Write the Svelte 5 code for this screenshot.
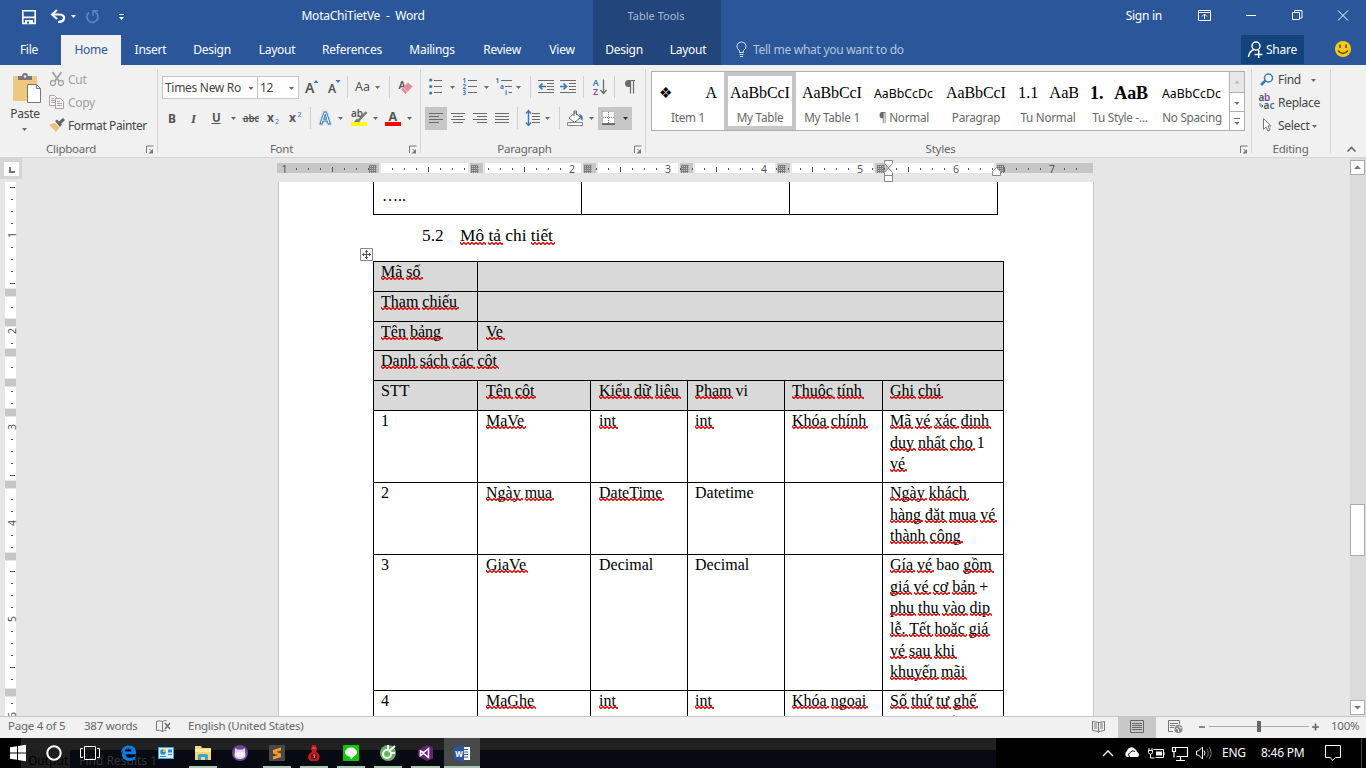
<script>
  const G = '#6a6a6a', B = '#3b78b5';
  const dn = (x, y, c = G) => `<path d="M${x - 2.5} ${y - 1}h5l-2.5 3z" fill="${c}"/>`;
  const t = (x, y, s, txt, extra = '') => `<text x="${x}" y="${y}" font-size="${s}" fill="#555" ${extra}>${txt}</text>`;
  const ln = (x1, x2, ys, c = G) => ys.map((y) => `<path d="M${x1} ${y}H${x2}" stroke="${c}"/>`).join('');
  const sep = (x, y) => `<path d="M${x}.5 ${y}v22" stroke="#d0d0d0"/>`;
  const launch = (x) => `<path d="M${x} 153v-7h7M${x + 3} 149l3 3" stroke="#777" fill="none"/><path d="M${x + 6.5} 149v4.500h-4.500z" fill="#777"/>`;

  const quick = [
    { x: 18, w: 24, m: '<path d="M22.8 10.8h12.4v12.6H22.8z" fill="none" stroke="#fff" stroke-width="1.6"/><path d="M23 16.5h12v1.7H23zM25 20h8v4h-8z" fill="#fff"/><path d="M27 21.5h2v2h-2z" fill="#2b579a"/>' },
    { x: 42, w: 38, m: '<path d="M52 14.5h7.5c6.5 0 6 7.500-1.500 7.500" fill="none" stroke="#fff" stroke-width="2.200"/><path d="M57 10l-5 4.500 5 4.500" fill="none" stroke="#fff" stroke-width="2"/>' + dn(73.5, 16, '#fff') },
    { x: 80, w: 28, m: '<path d="M89 12.500a5.500 5.500 0 1 0 5.500-.8" fill="none" stroke="#5f83bb" stroke-width="1.800"/><path d="M98 10.700h-5v5" fill="none" stroke="#5f83bb" stroke-width="1.600"/>' },
    { x: 108, w: 30, m: '<path d="M119 14.500h5" stroke="#fff"/>' + dn(121.5, 18, '#fff') }
  ];
  const tabs = [['Insert', 59], ['Design', 64], ['Layout', 66], ['References', 84], ['Mailings', 76], ['Review', 64], ['View', 56]];

  const font1 = [
    { x: 299, w: 27, m: t(305, 93, 14, 'A', 'font-weight="600"') + `<path d="M313.500 83l2.500-3 2.500 3z" fill="${B}"/>` },
    { x: 326, w: 22, m: t(328, 93, 12, 'A', 'font-weight="600"') + `<path d="M335.500 80h5l-2.500 3z" fill="${B}"/>` + sep(347, 76) },
    { x: 348, w: 42, m: t(355, 91, 12.5, 'Aa') + dn(377.500, 87) + sep(389, 76) },
    { x: 390, w: 28, m: t(398.500, 89, 10.500, 'A', 'font-weight="600"') + '<path d="M401 89.500l7-7 4.500 4-7 7.500z" fill="#e8899b"/><path d="M403 87.500l4.500 4.500" stroke="#f8d5dc"/>' }
  ];
  const font2 = [
    { x: 162, w: 22, m: t(168, 122.500, 12, 'B', 'font-weight="700"') },
    { x: 184, w: 20, m: t(191, 122.500, 13, 'I', 'font-style="italic" font-weight="600" font-family="Liberation Serif"') },
    { x: 204, w: 37, m: t(212, 121.500, 11.500, 'U', 'font-weight="700"') + '<path d="M211.500 123.500h9" stroke="#555"/>' + dn(233.500, 118) },
    { x: 241, w: 24, m: t(243, 122, 10.500, 'abc', 'font-weight="600" textLength="16" lengthAdjust="spacingAndGlyphs"') + '<path d="M242.500 118.500h16.500" stroke="#555"/>' },
    { x: 265, w: 22, m: t(267, 122, 12, 'x', 'font-weight="700"') + `<text x="275" y="124" font-size="7" fill="${B}">2</text>` },
    { x: 287, w: 24, m: t(289, 122, 12, 'x', 'font-weight="700"') + `<text x="297.500" y="116.500" font-size="7" fill="${B}">2</text>` + sep(310, 107) },
    { x: 311, w: 35, m: `<text x="320" y="123.500" font-size="15.500" font-weight="600" fill="#fff" stroke="${B}" stroke-width=".9" style="filter:drop-shadow(0 0 1px #8fb8e0)">A</text>` + dn(340.500, 118) },
    { x: 346, w: 35, m: t(351, 117, 10, 'ab', 'font-weight="600"') + '<path d="M366.500 112l-7.500 8" stroke="#777" stroke-width="2.500"/><path d="M354 122l3-3.500 3.500 2.500-1.500 1z" fill="#777"/><path d="M351 122h16v4h-16z" fill="#ff0"/>' + dn(375.500, 118) },
    { x: 381, w: 34, m: t(388.500, 121, 12.500, 'A', 'font-weight="700"') + '<path d="M385 122h16v4h-16z" fill="#f00"/>' + dn(409.500, 118) }
  ];
  const para1 = [
    { x: 421, w: 37, m: [80, 86.500, 93].map((y) => `<circle cx="430.700" cy="${y}" r="1.600" fill="${B}"/>`).join('') + ln(434, 442, [80.500, 86.500, 92.500]) + dn(452.500, 87) },
    { x: 458, w: 34, m: [1, 2, 3].map((n, i) => `<text x="462.500" y="${83 + i * 6}" font-size="6.200" font-weight="700" fill="${B}">${n}</text>`).join('') + ln(468, 477, [80.500, 86.500, 92.500]) + dn(486.500, 87) },
    { x: 492, w: 39, m: `<g font-size="6.500" font-weight="700" fill="${B}"><text x="495.500" y="83">1</text><text x="500" y="89">a</text><text x="505" y="95">i</text></g>` + ln(501, 512, [80.500]) + ln(505, 512, [86.500]) + ln(508.500, 512, [92.500]) + dn(518.500, 87) + sep(530, 76) },
    { x: 531, w: 26, m: ln(538, 554, [80.500, 92.500]) + ln(547, 554, [83.500, 86.500, 89.500]) + `<path d="M546 86.500h-6M542.500 83.500l-3 3 3 3" stroke="${B}" stroke-width="1.700" fill="none"/>` },
    { x: 557, w: 27, m: ln(560, 576, [80.500, 92.500]) + ln(569, 576, [83.500, 86.500, 89.500]) + `<path d="M560 86.500h6M563.500 83.500l3 3-3 3" stroke="${B}" stroke-width="1.700" fill="none"/>` + sep(583, 76) },
    { x: 584, w: 31, m: `<text x="592.800" y="85.800" font-size="9" font-weight="600" fill="${B}">A</text><text x="593" y="94.500" font-size="9" font-weight="600" fill="#8648a5">Z</text><path d="M603.500 79.500v13M600.500 90l3 3.500 3-3.500" stroke="${G}" fill="none" stroke-width="1.300"/>` + sep(614, 76) },
    { x: 615, w: 28, m: `<path d="M629 80.500h6M630.500 80.500v13M633.500 80.500v13" stroke="${G}" stroke-width="1.200"/><path d="M630 80h-1.500a3.500 3.500 0 0 0 0 7h1.500z" fill="${G}"/>` }
  ];
  const rowsY = [113.500, 116.500, 119.500, 122.500];
  const al = (x, mode) => rowsY.map((y, i) => { const w = i % 2 && mode !== 'j' ? 10 : 14; const s = mode === 'c' ? x + (14 - w) / 2 : mode === 'r' ? x + 14 - w : x; return ln(s, s + w, [y]); }).join('');
  const para2 = [
    { x: 425, w: 22, bg: 1, m: al(429, 'l') },
    { x: 447, w: 22, m: al(451, 'c') },
    { x: 469, w: 22, m: al(473, 'r') },
    { x: 491, w: 27, m: al(495, 'j') + sep(517, 107) },
    { x: 518, w: 42, m: ln(532, 540, rowsY) + `<path d="M528.500 111v14M526 113.500l2.500-3 2.500 3M526 122.500l2.500 3 2.500-3" stroke="${B}" fill="none" stroke-width="1.400"/>` + dn(547.500, 118) + sep(559, 107) },
    { x: 560, w: 38, m: `<path d="M569 118l6-5.500 5.500 5-6 5z" fill="#fff" stroke="${G}"/><path d="M574 116v-5h2.500v4" stroke="${G}" fill="none"/><path d="M579 114q5 1 3.500 7l-2.500-3z" fill="${B}"/><path d="M567.500 122.500h15v3h-15z" fill="#fff" stroke="#888"/>` + dn(591.500, 118) },
    { x: 598, w: 34, bg: 1, m: '<path d="M602 111h13v13h-13z" fill="#fff"/><path d="M602.500 111.500h12v12M602.500 111.500v12M608.500 112v12M603 117.500h12" fill="none" stroke="#777" stroke-dasharray="1 1"/><path d="M602 124h13" stroke="#444" stroke-width="1.500"/>' + dn(625.500, 118, '#333') }
  ];

  const styles = [
    ['❖', 'A', 'Item 1', 'item'], ['', 'AaBbCcI', 'My Table', 'on'], ['', 'AaBbCcI', 'My Table 1', ''], ['', 'AaBbCcDc', '¶ Normal', 'sans'],
    ['', 'AaBbCcI', 'Paragrap', ''], ['1.1', 'AaB', 'Tu Normal', 'num'], ['1.', 'AaB', 'Tu Style -...', 'bold'], ['', 'AaBbCcDc', 'No Spacing', 'sans']
  ];

  // horizontal ruler: 96px per inch with its origin at x=380
  const hTicks = [];
  for (let i = -7; i <= 58; i++) {
    const x = 380 + i * 12;
    if (i % 8 === 0) { const n = Math.abs(i / 8); if (n > 1) hTicks.push([x, 'n', n]); }
    else hTicks.push([x, i % 4 === 0 ? 'h' : 't']);
  }
  const whites = [[381, 468], [485, 581], [598, 678], [695, 775], [792, 873], [889, 994]];
  const marks = [373, 475, 588, 685, 782, 881, 1001];
  const vTicks = [];
  for (let i = -4; i <= 40; i++) {
    const y = 235 + i * 12;
    if (i % 8 === 0) vTicks.push([y, 'n', i / 8 + 1]);
    else vTicks.push([y, i % 4 === 0 ? 'h' : 't']);
  }
  const vGrey = [289, 319, 349, 379, 409, 481, 553, 689];

  const plain = new Set(['STT', '1', '2', '3', '4', 'vi', 'Datetime', 'Decimal', 'bao', '+', 'chi', '5.2']);
  const words = (s) => s.split(' ').map((w) => ({ w, bad: !plain.has(w) }));
  const rows = [
    { h: 30, k: 'two', grey: 1, c: [['Mã số'], ['']] },
    { h: 30, k: 'two', grey: 1, c: [['Tham chiếu'], ['']] },
    { h: 29, k: 'two', grey: 1, c: [['Tên bảng'], ['Ve']] },
    { h: 30, k: 'one', grey: 1, c: [['Danh sách các cột']] },
    { h: 30, k: 'six', grey: 1, c: [['STT'], ['Tên cột'], ['Kiểu dữ liệu'], ['Phạm vi'], ['Thuộc tính'], ['Ghi chú']] },
    { h: 72, k: 'six', c: [['1'], ['MaVe'], ['int'], ['int'], ['Khóa chính'], ['Mã vé xác định', 'duy nhất cho 1', 'vé']] },
    { h: 72, k: 'six', c: [['2'], ['Ngày mua'], ['DateTime'], ['Datetime'], [''], ['Ngày khách', 'hàng đặt mua vé', 'thành công']] },
    { h: 136, k: 'six', c: [['3'], ['GiaVe'], ['Decimal'], ['Decimal'], [''], ['Gía vé bao gồm', 'giá vé cơ bản +', 'phụ thu vào dịp', 'lễ. Tết hoặc giá', 'vé sau khi', 'khuyến mãi']] },
    { h: 72, k: 'six', c: [['4'], ['MaGhe'], ['int'], ['int'], ['Khóa ngoại'], ['Số thứ tự ghế', 'của chuyến']] }
  ];

  const apps = [
    { x: 0, w: 36, m: '<path d="M10 747.200l7-1v6.300h-7zM18 746l8-1.200v7.700h-8zM10 753.500h7v6.300l-7-1zM18 753.500h8v7.700l-8-1.200z" fill="#fff"/>' },
    { x: 36, w: 36, m: '<circle cx="54" cy="753" r="6.700" fill="none" stroke="#fff" stroke-width="2"/>' },
    { x: 72, w: 38, m: '<path d="M84.500 746.500h11v13h-11zM83 748.500h-2.500v9H83M97 748.500h2.500v9H97" fill="none" stroke="#fff"/>' },
    { x: 110, w: 37, m: '<path d="M121 753c.5-5 3.500-7.500 8-7.500 5 0 7.500 3.500 7 8.700h-10.500c.3 4 5.500 4.600 9.500 2.300v3c-5 2.500-13 1.500-13-5 0-3 2-5.500 4.500-6.300-1 1-1.600 2-1.700 3.300h6.700c.2-4-5.500-4.500-10.500 1.500z" fill="#0a7be0"/>' },
    { x: 147, w: 37, m: '<rect x="158" y="747" width="16" height="12" fill="#3ca2dd"/><path d="M159 748h14v10h-14z" fill="#d5eef9"/><circle cx="163" cy="752" r="2.800" fill="#2a8ccb"/><path d="M163 752v-3a3 3 0 0 1 3 3z" fill="#f2b84b"/><path d="M168 749.500h4v3h-4zM160 756h6v1h-6zM168 754h4v1h-4z" fill="#2a8ccb"/>' },
    { x: 184, w: 37, run: 1, m: '<path d="M195 746h6l1 2h9v12h-16z" fill="#f7d774"/><path d="M195 749h16v3h-16z" fill="#ffeaa0"/><path d="M198 760v-4q0-2 2-2h6q2 0 2 2v4h-3v-3h-4v3z" fill="#3aa5dc"/>' },
    { x: 221, w: 37, m: '<circle cx="240" cy="753" r="8" fill="#6e4596"/><path d="M235 748l2.500 1.500h5l2.500-1.500v4c2 6-2 7-5 7s-7-1-5-7z" fill="#ded5ea"/><path d="M235.500 753q4.500-2 9 0 .5 4-4.500 4t-4.500-4" fill="#f7edf0"/>' },
    { x: 258, w: 37, run: 1, m: '<rect x="269" y="745" width="16" height="16" rx="1" fill="#484848"/><path d="M273 750l8-2.500v3l-5 1.600 5 1.500v3.500l-8 2.500v-3l5-1.600-5-1.600z" fill="#ff9b20"/>' },
    { x: 295, w: 37, run: 1, m: '<path d="M312 745h4l1 4-1 3c5 2 4 8 1 9h-6c-4-1-4-7 1-9l-1-3z" fill="#c51b20"/><circle cx="314" cy="756.500" r="3" fill="#601015"/><path d="M312.500 748h3M313 755h2l-1 3" stroke="#ff7773" fill="none"/>' },
    { x: 332, w: 37, run: 1, m: '<rect x="343" y="745" width="16" height="16" rx="1" fill="#08c900"/><ellipse cx="351" cy="752.300" rx="6" ry="4.700" fill="#fff"/><path d="M350 756h4l-3 3.500z" fill="#fff"/>' },
    { x: 369, w: 37, run: 1, m: '<circle cx="388" cy="753" r="8" fill="#65b45f"/><circle cx="387" cy="754" r="4" fill="none" stroke="#fff" stroke-width="2"/><path d="M389 751l6-5M388 745v4M395 753h-4" stroke="#fff" stroke-width="2"/>' },
    { x: 406, w: 38, run: 1, m: '<path d="M427 745l6 2.500v11l-6 2.500-9-5v-6z" fill="#68217a"/><path d="M420.500 751v4.500l3-2 5 4v-9l-5 4z" fill="none" stroke="#fff" stroke-width="1.500"/>' },
    { x: 444, w: 36, act: 1, run: 1, m: '<path d="M462 747h8v13h-8z" fill="#fff"/><path d="M463 749.500h5M463 752h5M463 754.500h5M463 757h5" stroke="#2b579a"/><path d="M454 747l10-2v17l-10-2z" fill="#2b579a"/><text x="455.300" y="757" font-size="8" font-weight="700" fill="#fff">W</text>' }
  ];
  const tray = '<path d="M1103 756l5-5 5 5" stroke="#fff" fill="none" stroke-width="1.300"/><path d="M1127 757a3.500 3.500 0 0 1 0-6 4.500 4.500 0 0 1 8-2 4 4 0 0 1 2 3 3 3 0 0 1 1 5z" fill="#fff"/><path d="M1129.500 757q-2.500-3 .5-4.500 2-3 5-1" stroke="#000" fill="none"/><path d="M1153.500 749.500h10v8h-8M1164 752v3M1149 748v3M1152 748v3M1148.500 750.500h4v2q-1 2-2 2t-2-2zM1150.500 754v4h4" stroke="#fff" fill="none"/><path d="M1156 751.500h6v4h-6z" fill="#fff"/><path d="M1176 747.500h11.500v9h-11M1180.500 757v3M1176 760.500h9M1172.500 747.500h3v4h-3zM1174 751.500v6" stroke="#fff" fill="none" stroke-width="1.200"/><path d="M1196.500 751h2l4-4v12l-4-4h-2z" stroke="#fff" fill="none"/><path d="M1204 750.500q2 2.500 0 5" stroke="#fff" fill="none"/><path d="M1206.500 748.500q3.500 4.500 0 9M1209 747q4.500 6 0 12" stroke="#777" fill="none"/>';
</script>

{#snippet ic(x, y, w, h, m)}
  <svg width={w} height={h} viewBox="{x} {y} {w} {h}">{@html m}</svg>
{/snippet}
{#snippet line(s)}
  {#each words(s) as p, i}{#if i}{' '}{/if}<span class:bad={p.bad && p.w}>{p.w}</span>{/each}
{/snippet}

<div class="window">
  <header>
    <div class="title-row">
      {#each quick as q}{@render ic(q.x, 0, q.w, 35, q.m)}{/each}
      <span class="doc-name">MotaChiTietVe&nbsp; -&nbsp; Word</span>
      <span class="context">Table Tools</span>
      <span class="sign">Sign in</span>
      {@render ic(1180, 0, 186, 35, '<path d="M1198.500 10.500h12v10h-12zM1198.500 12.500h12M1204.500 19v-5M1202 16.500l2.500-2.500 2.500 2.500M1246 15.500h10M1292.500 12.500h7v7h-7zM1294.500 12v-1.500h7.500v7.500h-2M1338 10.500l10 10M1348 10.500l-10 10" stroke="#fff" fill="none"/>')}
    </div>
    <nav>
      <span class="file">File</span><span class="home">Home</span>
      {#each tabs as [n, w]}<span style:width="{w}px">{n}</span>{/each}
      <span class="ctx d">Design</span><span class="ctx l">Layout</span>
      {@render ic(721, 35, 32, 30, '<path d="M739.500 52.500v-2q-3-2-2.500-5 .5-3.500 4.500-3.500t4.500 3.500q.5 3-2.500 5v2zM739.500 54.500h4M740 56.500h3" stroke="#d5deec" fill="none"/>')}
      <span class="tell">Tell me what you want to do</span>
      <span class="share">{@render ic(1241, 35, 25, 30, '<circle cx="1256" cy="46" r="4" stroke="#fff" fill="none" stroke-width="1.400"/><path d="M1254 49.500q-5 2-5.500 7.500M1257.500 49.500l2 2M1254.500 54.500h8M1258.700 51v7" stroke="#fff" fill="none" stroke-width="1.400"/>')}Share</span>
      {@render ic(1304, 35, 62, 30, '<circle cx="1343" cy="49" r="8" fill="#fcca12"/><path d="M1340 44.500v3.500M1346 44.500v3.500M1338 50.500q5 6 10 0" stroke="#5b4a20" stroke-width="1.500" fill="none"/>')}
    </nav>
  </header>

  <section class="ribbon">
    <div class="group clip">
      <div class="content">
        <div class="paste">
          {@render ic(0, 70, 46, 36, '<path d="M13 76h24v25H13z" fill="#edc87e"/><path d="M18 76h4q0-3 3-3t3 3h4v4H18z" fill="#777"/><circle cx="25" cy="76.500" r="1.300" fill="#f1f1f1"/><path d="M27.500 84.500h9l4 4v14h-13z" fill="#fff" stroke="#777"/><path d="M36.500 84.500v4h4" fill="none" stroke="#777"/>')}
          <span>Paste</span>
          {@render ic(0, 124, 46, 10, dn(24.5, 129))}
        </div>
        <div class="cmds">
          <div class="off">{@render ic(46, 68, 22, 23, '<path d="M52.500 72l6.500 9M61.500 72l-6.500 9" stroke="#a6a6a6" stroke-width="2" fill="none"/><circle cx="53" cy="83" r="2.500" stroke="#a6a6a6" fill="none" stroke-width="1.300"/><circle cx="61" cy="83" r="2.500" stroke="#a6a6a6" fill="none" stroke-width="1.300"/>')}Cut</div>
          <div class="off">{@render ic(46, 91, 22, 23, '<path d="M49.500 95.500h5l3 3v7h-8zM51 98.500h3M51 100.500h4M51 102.500h4" fill="#f7f4f6" stroke="#aaa3a8"/><path d="M55.500 98.500h5l3 3v7h-8zM57 101.500h3M57 103.500h5M57 105.500h5" fill="#f7f4f6" stroke="#aaa3a8"/>')}Copy</div>
          <div class="fp">{@render ic(46, 114, 22, 23, '<path d="M49 124.500l6-1.500 4.500 4.500-3.500 4.500z" fill="#edc07b"/><path d="M55 121l2-1.500 5 5-2 2.500zM59 121.500l4-3.500 2 2-4 4z" fill="#666"/>')}Format Painter</div>
        </div>
      </div>
      <footer><span>Clipboard</span>{@render ic(142, 143, 14, 12, launch(146.5))}</footer>
    </div>

    <div class="group fontg">
      <div class="tools one">
        <span class="combo face">Times New Ro{@render ic(243, 78, 12, 18, dn(249, 87))}</span><span class="combo size">12{@render ic(286, 78, 12, 18, dn(291.5, 87))}</span>
        {#each font1 as i}{@render ic(i.x, 76, i.w, 24, i.m)}{/each}
      </div>
      <div class="tools two">{#each font2 as i}{@render ic(i.x, 107, i.w, 23, i.m)}{/each}</div>
      <footer><span>Font</span>{@render ic(405, 143, 14, 12, launch(409.5))}</footer>
    </div>

    <div class="group parag">
      <div class="tools one">{#each para1 as i}{@render ic(i.x, 76, i.w, 24, i.m)}{/each}</div>
      <div class="tools two">{#each para2 as i}<span class:pressed={i.bg}>{@render ic(i.x, 107, i.w, 23, i.m)}</span>{/each}</div>
      <footer><span>Paragraph</span>{@render ic(630, 143, 14, 12, launch(634.5))}</footer>
    </div>

    <div class="group styleg">
      <div class="gallery">
        {#each styles as [pre, s, n, k]}
          <div class="style {k}"><div class="sample">{#if pre}<i>{pre}</i>{/if}<b>{s}</b></div><span>{n}</span></div>
        {/each}
        <div class="spin">
          <i class="dim">{@render ic(0, 0, 14, 20, '<path d="M4.500 11.500h5l-2.500-3z" fill="#b5b5b5"/>')}</i>
          <i>{@render ic(0, 0, 14, 18, dn(7, 10))}</i>
          <i>{@render ic(0, 0, 14, 18, '<path d="M4 6.500h6" stroke="#666"/>' + dn(7, 11))}</i>
        </div>
      </div>
      <footer><span>Styles</span>{@render ic(1236, 143, 14, 12, launch(1240.5))}</footer>
    </div>

    <div class="group edit">
      <div class="cmds">
        <div>{@render ic(1252, 68, 26, 23, '<circle cx="1268.500" cy="78" r="4" fill="#fff" stroke="#3b78b5" stroke-width="1.500"/><path d="M1265.500 80.500l-4.500 4.500" stroke="#3b78b5" stroke-width="2.500"/>')}Find{@render ic(1301, 68, 20, 23, dn(1313.5, 80))}</div>
        <div>{@render ic(1252, 91, 26, 23, '<g font-size="10" font-weight="600"><text x="1258.500" y="101" fill="#555">a</text><text x="1264" y="101" fill="#8648a5">b</text><text x="1263.500" y="108.500" fill="#555">a</text><text x="1269.500" y="108.500" fill="#3b78b5">c</text></g><path d="M1260 103v3h3M1261.500 104.500l1.500 1.500-1.500 1.500" fill="none" stroke="#3b78b5"/>')}Replace</div>
        <div>{@render ic(1252, 114, 26, 23, '<path d="M1263.500 118.500v11l2.500-2.500 2 4 2-1-2-4h3z" fill="#fff" stroke="#777"/>')}Select{@render ic(1310, 114, 10, 23, dn(1314.5, 126))}</div>
      </div>
      <footer><span>Editing</span></footer>
    </div>
    <div class="fold">{@render ic(1340, 140, 20, 16, '<path d="M1347.500 151.500l4-4 4 4" fill="none" stroke="#666" stroke-width="1.600"/>')}</div>
  </section>

  <main>
    <aside class="left">
      <div class="corner"><svg width="15" height="14"><path d="M6 5v5h5" stroke="#777" stroke-width="2" fill="none" /></svg></div>
      <svg class="vr" width="12" height="534" viewBox="5 182 12 534">
        <path d="M5 182h11v534H5z" fill="#fff" />
        {#each vTicks as [y, k, n]}
          {#if k === 'n'}<text transform="translate(15.500 {y}) rotate(-90)" text-anchor="middle" font-size="10.500" fill="#555">{n}</text>
          {:else}<path d={k === 'h' ? `M10 ${y + 0.5}h5` : `M11 ${y + 0.5}h2`} stroke="#555" />{/if}
        {/each}
        {#each vGrey as y}<path d="M4 {y - 1}h13v9H4z" fill="#e6e6e6" /><path d="M5 {y}h11v7H5z" fill="#c6c6c6" />{/each}
      </svg>
    </aside>

    <div class="canvas">
      <svg class="hr" width="818" height="24" viewBox="277 158 818 24">
        <path d="M277 163h816v10H277z" fill="#c6c6c6" />
        {#each whites as [a, b]}<path d="M{a - 2} 163h{b - a + 4}v10h-{b - a + 4}z" fill="#e6e6e6" /><path d="M{a} 163h{b - a}v10h-{b - a}z" fill="#fff" />{/each}
        <text x="284.500" y="172.500" text-anchor="middle" font-size="10.500" fill="#555">1</text>
        {#each hTicks as [x, k, n]}
          {#if k === 'n'}<text {x} y="172.500" text-anchor="middle" font-size="10.500" fill="#555">{n}</text>
          {:else}<path d={k === 'h' ? `M${x + 0.5} 167v5` : `M${x + 0.5} 168v2`} stroke="#555" />{/if}
        {/each}
        {#each marks as x}
          <path d="M{x - 3.500} 165v8m2 -8v8m2 -8v8m2 -8v8M{x - 4} 165.500h7.500m-7.500 2h7.500m-7.500 2h7.500m-7.500 2h7.500" stroke="#777" stroke-width=".9" />
        {/each}
        <path d="M884.500 160.500h8v3l-4 4.500-4-4.500zM884.500 175.500v-3l4-4.500 4 4.500v3zM884.500 175.500h8v6h-8zM992.500 175.500v-4l4-4 4 4v4z" fill="#fff" stroke="#888" />
      </svg>
      <article>
        <div class="prev"><div>…..</div><div></div><div></div></div>
        <h2><span>5.2</span><span>{@render line('Mô tả chi tiết')}</span></h2>
        <div class="table">
          <svg class="grip" width="13" height="13"><path d="M.5.5h12v12H.5z" fill="#fff" stroke="#888" /><path d="M6.500 2.500v8M2.500 6.500h8M5 4l1.500-1.500L8 4M5 9l1.500 1.500L8 9M4 5L2.500 6.500 4 8M9 5l1.500 1.500L9 8" stroke="#555" fill="none" /></svg>
          {#each rows as r}
            <div class="row {r.k}" class:grey={r.grey} style:height="{r.h}px">
              {#each r.c as cell}<div class="cell">{#each cell as l}<p>{@render line(l)}</p>{/each}</div>{/each}
            </div>
          {/each}
        </div>
      </article>
    </div>

    <aside class="scroll">
      <i class="btn"><svg width="13" height="13"><path d="M3 8h7L6.500 4.500z" fill="#777" /></svg></i>
      <i class="thumb"></i>
      <i class="btn last"><svg width="13" height="13"><path d="M3 5h7L6.500 8.500z" fill="#777" /></svg></i>
    </aside>
  </main>

  <section class="status">
    <span class="pg">Page 4 of 5</span><span class="wc">387 words</span>
    {@render ic(150, 717, 38, 21, '<path d="M162.500 721.500q-3-1.500-6 0v9q3-1 6 1zM162.500 721.500q2-1.300 4-1M162.500 731.500q2-2 4-1" stroke="#777" fill="none"/><path d="M165 723l5 6M170 723l-5 6" stroke="#666" stroke-width="1.400"/>')}
    <span class="lang">English (United States)</span>
    {@render ic(1080, 717, 38, 21, '<path d="M1092.500 721.500l6 1 6-1v9l-6 1-6-1zM1098.500 722v11" fill="none" stroke="#777"/><path d="M1094 724h3M1094 726h3M1094 728h3M1100 724h3M1100 726h3M1100 728h3" stroke="#777"/>')}
    <span class="view">{@render ic(1118, 717, 38, 21, '<path d="M1130.500 720.500h13v12h-13zM1132 723.500h10M1132 725.500h10M1132 727.500h10M1132 729.500h10" fill="none" stroke="#666"/>')}</span>
    {@render ic(1156, 717, 170, 21, '<path d="M1173 731.500h-4.500v-11h11v4M1170 723.500h8M1170 725.500h5M1170 727.500h4" fill="none" stroke="#777"/><circle cx="1178.500" cy="729" r="4" fill="#888"/><path d="M1176 728l2 1 1 3M1179 726l1 2 2 0" stroke="#eee" fill="none"/><path d="M1199 727h6M1312 727h7M1315.500 723.500v7" stroke="#666" stroke-width="1.700"/><path d="M1209 726.500h100" stroke="#aaa"/><path d="M1257 721h4v11h-4z" fill="#666"/>')}
    <span class="zoom">100%</span>
  </section>

  <section class="taskbar">
    <div class="ghost"><span>Output</span><span>Find Results 1</span></div>
    {#each apps as a}<span class="app" class:run={a.run} class:act={a.act}>{@render ic(a.x, 738, a.w, 30, a.m)}</span>{/each}
    <div class="tray">
      {@render ic(1098, 738, 118, 30, tray)}
      <span class="eng">ENG</span><span class="clock">8:46 PM</span>
      {@render ic(1310, 738, 56, 30, '<path d="M1325.500 745.500h15v12h-5l-3 3-2-3h-5z" fill="none" stroke="#fff"/><path d="M1361.500 738v30" stroke="#444"/>')}
    </div>
  </section>
</div>

<style>
  :global(body) { margin: 0; overflow: hidden; }
  .window { width: 1366px; height: 768px; display: flex; flex-direction: column; overflow: hidden; background: #e6e6e6; color: #444; font: 12px/16px "Noto Sans", "Open Sans", sans-serif; letter-spacing: -0.25px; white-space: nowrap; }
  svg { display: block; flex: none; letter-spacing: 0; }
  header { height: 65px; background: linear-gradient(90deg, transparent 593px, #22457b 593px, #22457b 721px, transparent 721px) #2b579a; color: #fff; flex: none; }
  .title-row, nav { display: flex; align-items: center; }
  .title-row { height: 35px; padding-left: 18px; line-height: 32px; align-items: flex-start; }
  .doc-name { width: 450px; text-align: center; }
  .title-row .doc-name, .title-row .context, .title-row .sign { box-sizing: border-box; }
  .context { width: 136px; color: #a9bbd6; text-align: center; letter-spacing: 0; font-size: 11px; }
  .sign { width: 456px; text-align: right; padding-right: 18px; }
  nav { height: 30px; }
  nav > span { text-align: center; line-height: 30px; height: 30px; }
  .file { width: 58px; margin-right: 3px; }
  .home { width: 60px; background: #f1f1f1; color: #2b579a; }
  .ctx.d { width: 62px; margin-left: 3px; }
  .ctx.l { width: 66px; }
  nav .tell { width: 488px; text-align: left; color: #b6c6df; letter-spacing: -0.28px; }
  nav .share { width: 63px; display: flex; background: #12437c; height: 29px; margin-bottom: 1px; }

  .ribbon { height: 92px; flex: none; display: flex; background: #f1f1f1; border-bottom: 1px solid #d5d5d5; }
  .group { box-sizing: border-box; display: flex; flex-direction: column; height: 92px; padding-top: 3px; background: linear-gradient(#d5d5d5, #d5d5d5) right 4px / 1px 84px no-repeat; }
  .group footer { margin-top: auto; height: 16px; display: flex; align-items: center; color: #666; padding-right: 2px; font-size: 11.500px; }
  .group footer span { flex: 1; text-align: center; }
  .styleg footer span { padding-right: 6px; }
  .parag footer span { padding-right: 2px; }
  .clip { width: 158px; }
  .content { display: flex; }
  .paste { width: 46px; padding-top: 2px; display: flex; flex-direction: column; }
  .paste span { text-align: center; padding-left: 4px; height: 18px; }
  .cmds > div { display: flex; align-items: center; height: 23px; }
  .cmds .fp { letter-spacing: -0.4px; }
  .off { color: #a0a0a0; }
  .fontg { width: 263px; }
  .fontg .tools { padding-left: 4px; }
  .tools { display: flex; }
  .tools.one { padding-top: 8px; }
  .tools.two { padding-top: 7px; }
  .combo { box-sizing: border-box; height: 23px; background: #fff; border: 1px solid #c6c6c6; display: flex; align-items: center; justify-content: space-between; padding-left: 2px; }
  .face { width: 95px; border-right: 0; letter-spacing: -0.3px; }
  .size { width: 42px; }
  .parag { width: 225px; }
  .parag .two { padding-left: 4px; }
  .pressed { background: #c6c6c6; }
  .styleg { width: 606px; padding-top: 6px; padding-left: 5px; }
  .gallery { box-sizing: border-box; width: 594px; height: 60px; border: 1px solid #b0b0b0; background: #fff; display: flex; }
  .style { box-sizing: border-box; width: 72px; height: 58px; padding: 8px 5px 0; display: flex; flex-direction: column; align-items: center; color: #666; font-size: 11.700px; }
  .style.on { border: 4px solid #c6c6c6; padding: 4px 1px 0; }
  .sample { width: 60px; height: 29px; overflow: hidden; display: flex; gap: 11px; color: #000; font: 16px/26px "Liberation Serif", serif; letter-spacing: -0.1px; }
  .sample i, .sample b { font-style: normal; font-weight: inherit; }
  .item .sample { justify-content: space-between; width: 58px; margin-left: 0; }
  .item i { font-family: "DejaVu Sans", sans-serif; font-size: 15px; }
  .num .sample { font-size: 16.500px; }
  .sans .sample { font: 12.300px/27px "Noto Sans", sans-serif; letter-spacing: 0; }
  .bold .sample { font-weight: 700; font-size: 18px; gap: 11px; }
  .spin { width: 15px; margin-left: auto; border-left: 1px solid #b0b0b0; display: flex; flex-direction: column; box-sizing: border-box; }
  .spin i { display: block; flex: 1; border-bottom: 1px solid #b0b0b0; }
  .spin i:last-child { border: 0; }
  .spin .dim { background: #e8e8e8; }
  .edit { width: 79px; }
  .edit footer { padding: 0 2px 0 0; }
  .cmds { letter-spacing: -0.3px; }
  .fold { display: flex; align-items: flex-end; padding: 0 0 1px 9px; }

  main { height: 558px; flex: none; display: flex; }
  .left { width: 22px; }
  .corner { width: 22px; height: 21px; background: #d5d5d5; box-sizing: border-box; padding: 4px 0 0 4px; margin-bottom: 3px; }
  .corner svg { background: #fcfcfc; }
  .vr { margin-left: 5px; }
  .canvas { width: 818px; margin-left: 255px; margin-right: auto; }
  article { box-sizing: border-box; width: 816px; margin-left: 1px; height: 534px; overflow: hidden; border: solid #c6c6c6; border-width: 0 1px; background: #fff; padding-left: 94px; color: #000; font: 16px/21.330px "Liberation Serif", serif; letter-spacing: 0; }
  .prev { display: grid; grid-template-columns: 208px 208px 208px; width: 624px; height: 32px; border: solid #000; border-width: 0 0 1px 1px; }
  .prev div { border-right: 1px solid #000; padding: 3px 0 0 8px; font-size: 16px; }
  h2 { margin: 0; height: 46px; display: flex; padding: 9px 0 0 49px; box-sizing: border-box; font-size: 17.330px; font-weight: 400; line-height: 24px; }
  h2 > span:first-child { width: 38px; }
  .table { width: 630px; border: solid #000; border-width: 1px 0 0 1px; position: relative; }
  .grip { position: absolute; left: -14px; top: -14px; }
  .row { display: grid; }
  .row.two { grid-template-columns: 104px 526px; }
  .row.one { grid-template-columns: 630px; }
  .row.six { grid-template-columns: 104px 113px 97px 97px 98px 121px; }
  .grey { background: #d9d9d9; }
  .cell { border: solid #000; border-width: 0 1px 1px 0; padding-left: 8px; overflow: hidden; min-width: 0; }
  .cell:first-child, .cell:nth-child(n + 4) { padding-left: 7px; }
  p { margin: 0; }
  p:first-child { margin-top: -0.700px; }
  .bad { position: relative; }
  .bad::after { content: ""; position: absolute; left: 0; right: -2px; bottom: 0; height: 3px; background: url("data:image/svg+xml,%3Csvg xmlns='http://www.w3.org/2000/svg' width='4' height='3'%3E%3Cpath d='M-1 .5L0 .5 2 2.500 4 .5 5 .5' fill='none' stroke='%23e00000' stroke-width='1.300'/%3E%3C/svg%3E") repeat-x; }
  .scroll { width: 16px; padding-top: 2px; display: flex; flex-direction: column; background: #dbdbdb; margin-bottom: 1px; }
  .btn, .thumb { box-sizing: border-box; width: 15px; height: 15px; background: #fff; border: 1px solid #ababab; }
  .thumb { height: 52px; margin-top: 329px; }
  .last { margin-top: auto; }

  .status { height: 22px; box-sizing: border-box; border-top: 1px solid #c6c6c6; background: #f1f1f1; display: flex; align-items: center; flex: none; color: #666; font-size: 11.500px; }
  .pg, .wc, .lang, .zoom { padding-bottom: 3px; }
  .pg { width: 76px; padding-left: 8px; }
  .wc { width: 66px; }
  .lang { width: 892px; }
  .view { background: #c8c8c8; }
  .zoom { padding-left: 5px; }

  .taskbar { position: relative; height: 30px; flex: none; background: #000; display: flex; color: #fff; }
  .ghost { position: absolute; left: 21px; top: 0; width: 975px; height: 30px; background: linear-gradient(90deg, #1e1e1e 49px, transparent 49px) 0 12px no-repeat, linear-gradient(#212121 12px, #070a10 12px); color: #33363a; display: flex; gap: 11px; padding-left: 7px; box-sizing: border-box; line-height: 45px; overflow: hidden; letter-spacing: 0; }
  .ghost span:first-child { color: #000; }
  .app { position: relative; }
  .act { background: #48494b; }
  .run::after { content: ""; position: absolute; left: 5px; right: 4px; bottom: 0; height: 2px; background: #a8c6b3; }
  .act::after { left: 0; right: 0; }
  .tray { position: relative; margin-left: auto; display: flex; align-items: center; }
  .eng { width: 39px; padding-left: 6px; }
  .clock { width: 49px; }
</style>
